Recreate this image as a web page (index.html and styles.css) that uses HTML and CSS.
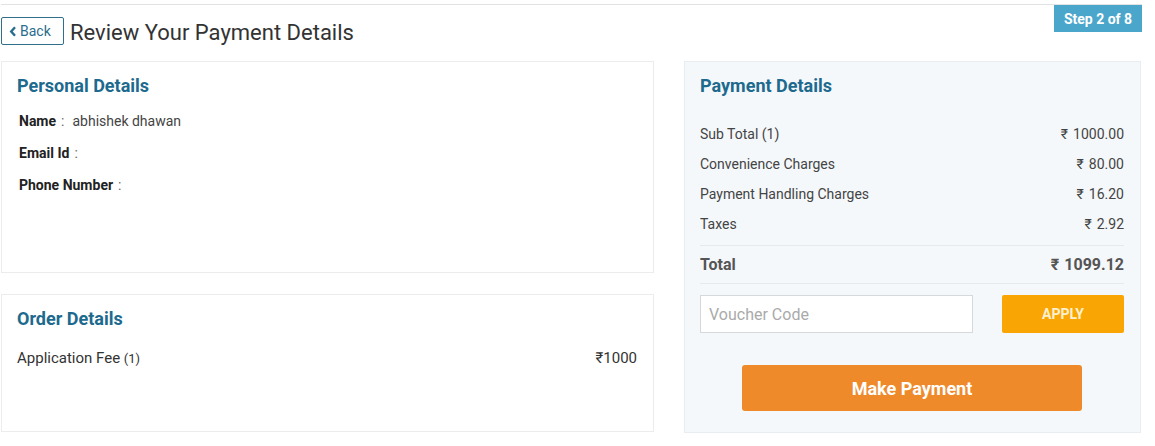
FILE: index.html
```html
<!DOCTYPE html>
<html>
<head>
<meta charset="utf-8">
<link rel="stylesheet" href="styles.css">
</head>
<body>
<div class="page">
  <header class="header">
    <button class="back"><svg class="chev" width="8" height="11" viewBox="0 0 8 11"><path d="M6 1.2 L2.2 5.5 L6 9.8" fill="none" stroke="currentColor" stroke-width="2.4"/></svg>Back</button>
    <h1 class="title">Review Your Payment Details</h1>
    <div class="step">Step 2 of 8</div>
  </header>
  <main class="grid">
    <div class="left">
      <section class="card personal">
        <h2 class="card-title">Personal Details</h2>
        <div class="info-row"><span class="lbl">Name</span><span class="sep">:</span><span class="val">abhishek dhawan</span></div>
        <div class="info-row"><span class="lbl">Email Id</span><span class="sep">:</span><span class="val"></span></div>
        <div class="info-row"><span class="lbl">Phone Number</span><span class="sep">:</span><span class="val"></span></div>
      </section>
      <section class="card order">
        <h2 class="card-title">Order Details</h2>
        <div class="order-row"><span>Application Fee <small>(1)</small></span><span>₹1000</span></div>
      </section>
    </div>
    <section class="card payment">
      <h2 class="card-title">Payment Details</h2>
      <div class="lines">
        <div class="line"><span>Sub Total (1)</span><span><span class="rs">₹</span>1000.00</span></div>
        <div class="line"><span>Convenience Charges</span><span><span class="rs">₹</span>80.00</span></div>
        <div class="line"><span>Payment Handling Charges</span><span><span class="rs">₹</span>16.20</span></div>
        <div class="line"><span>Taxes</span><span><span class="rs">₹</span>2.92</span></div>
      </div>
      <div class="total"><span>Total</span><span><span class="rs">₹</span>1099.12</span></div>
      <div class="voucher">
        <input class="vinput" type="text" placeholder="Voucher Code">
        <button class="apply">APPLY</button>
      </div>
      <div class="paywrap"><button class="pay">Make Payment</button></div>
    </section>
  </main>
</div>
</body>
</html>
```

FILE: styles.css
```css
* { box-sizing: border-box; }
html, body { margin: 0; padding: 0; background: #fff; }
body { font-family: Roboto, "Noto Sans", "Liberation Sans", sans-serif; color: #333; }
.page { width: 1141px; margin-top: 4px; margin-left: 1px; border-top: 1px solid #e2e2e2; }
.header { display: flex; align-items: flex-start; height: 56px; }
.back {
  margin-top: 12px; height: 28px; width: 63px; padding: 0 0 0 7px;
  display: flex; align-items: center; gap: 3px;
  background: #fff; border: 1px solid #2f6f8c; border-radius: 2px;
  color: #2a6d8c; font-family: Roboto, sans-serif; font-size: 14px; cursor: pointer;
}
.chev { margin-top: 1px; }
.title { margin: 13px 0 0 6px; font-size: 22px; font-weight: 400; color: #333; line-height: 30px; }
.step {
  margin-left: auto; background: #4ba6cb; color: #fff; font-weight: 700; font-size: 14px;
  height: 27px; width: 88px; display: flex; align-items: center; justify-content: center;
}
.grid { display: grid; grid-template-columns: 653px 457px; column-gap: 30px; }
.left { display: flex; flex-direction: column; gap: 21px; }
.card { border: 1px solid #ececec; background: #fff; padding: 13px 16px 0 15px; }
.card-title { margin: 0; font-size: 18px; font-weight: 700; color: #1d6a8e; line-height: 22px; }
.personal { height: 212px; }
.info-row { margin-top: 12px; padding-left: 2px; font-size: 14px; line-height: 20px; display: flex; }
.personal .card-title + .info-row { margin-top: 14px; }
.lbl { font-weight: 700; color: #222; }
.sep { color: #666; margin: 0 8px 0 5px; }
.val { color: #444; }
.order { height: 138px; }
.order-row { margin-top: 19px; display: flex; justify-content: space-between; font-size: 15px; color: #333; }
.order-row small { font-size: 13px; }
.payment { background: #f5f8fb; border-color: #e8edf1; height: 372px; }
.lines { margin-top: 22px; }
.line { display: flex; justify-content: space-between; height: 30px; align-items: center; font-size: 14px; color: #444; }
.rs { margin-right: 5px; }
.total {
  margin-top: 6px; border-top: 1px solid #e6eaee; border-bottom: 1px solid #e6eaee;
  height: 39px; display: flex; justify-content: space-between; align-items: center;
  font-size: 16px; font-weight: 700; color: #555;
}
.voucher { margin-top: 11px; display: flex; justify-content: space-between; }
.vinput {
  width: 273px; height: 38px; border: 1px solid #d6d9dc; background: #fff; padding: 0 8px;
  font-family: Roboto, sans-serif; font-size: 16px; color: #333;
}
.vinput::placeholder { color: #aaa; }
.apply {
  width: 122px; height: 38px; background: #f9a605; border: none; border-radius: 2px;
  color: #fdf0cf; font-family: Roboto, sans-serif; font-weight: 700; font-size: 14px;
}
.paywrap { display: flex; justify-content: center; margin-top: 32px; }
.pay {
  width: 340px; height: 46px; background: #ef8a2b; border: none; border-radius: 3px;
  color: #fff; font-family: Roboto, sans-serif; font-weight: 700; font-size: 18px;
}
```
